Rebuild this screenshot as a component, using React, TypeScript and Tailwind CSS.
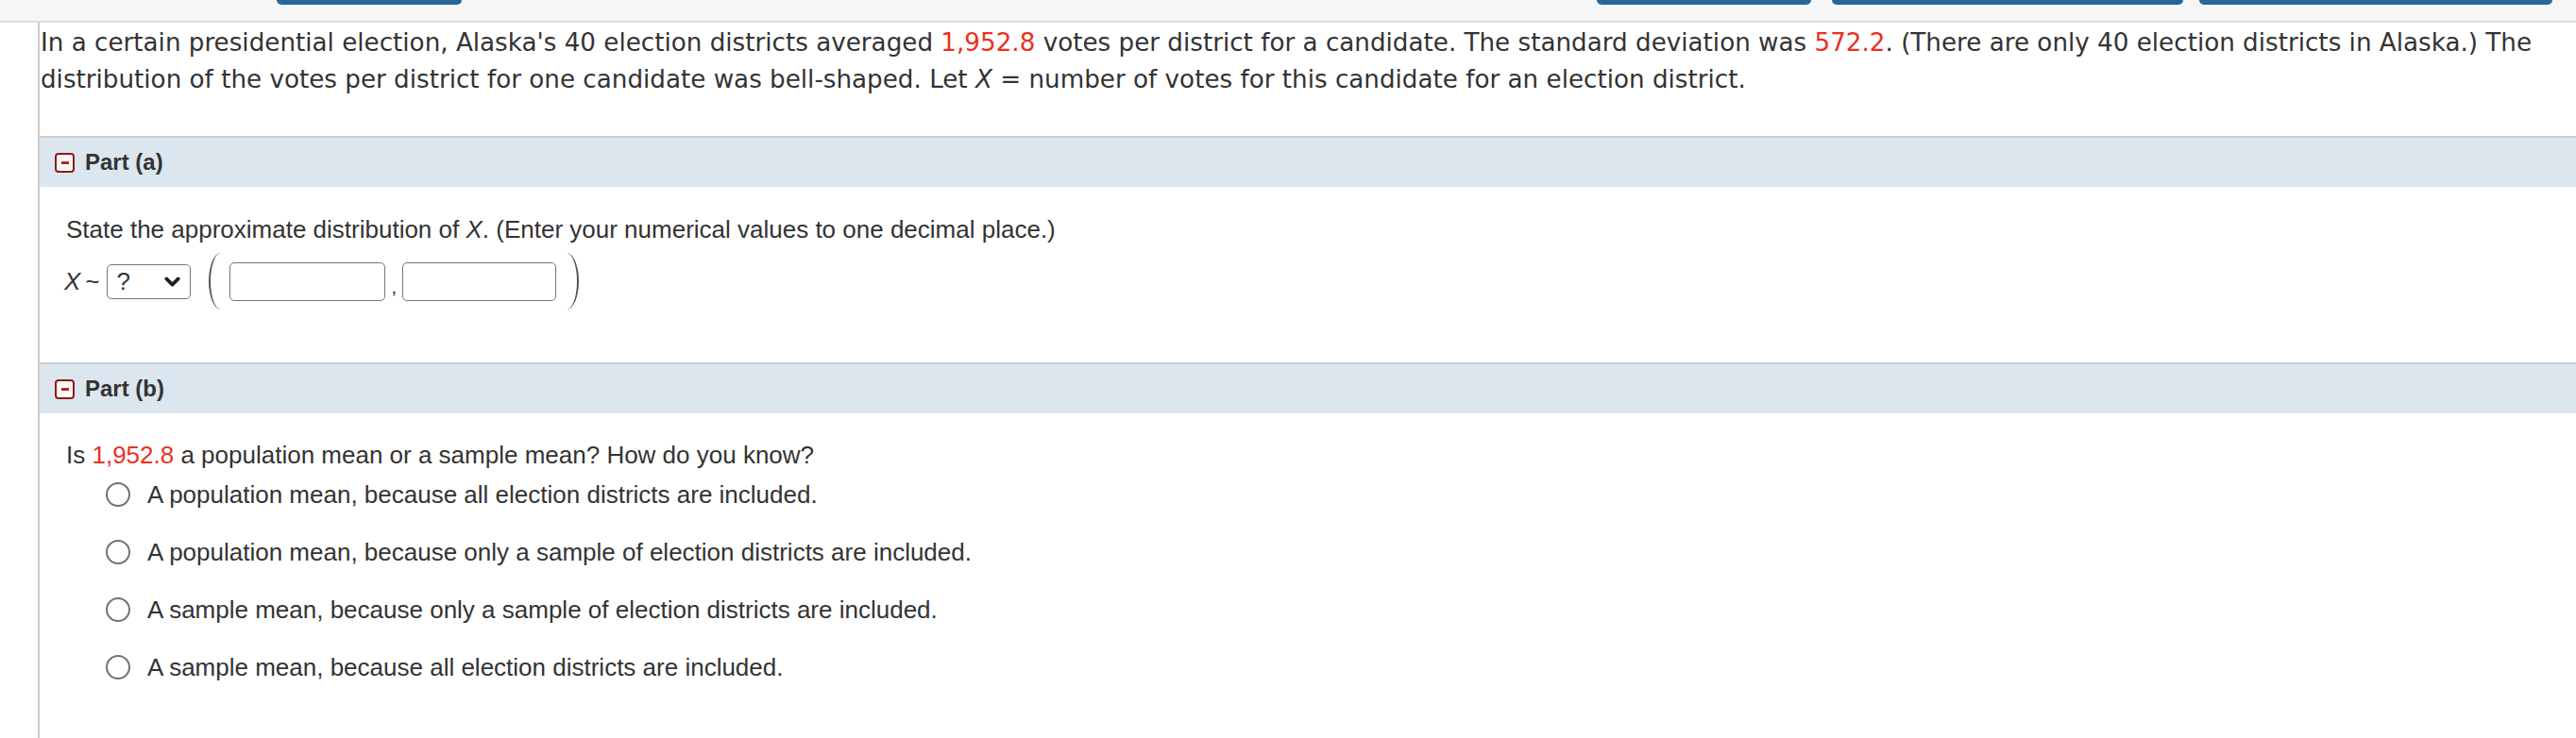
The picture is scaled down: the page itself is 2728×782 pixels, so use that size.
import { ChevronDown } from "lucide-react";

// ─── Shared bits ──────────────────────────────────────────────────────────────
const RED = "text-[#e8311f]";

function CollapseIcon() {
  return (
    <span className="flex h-[21px] w-[21px] shrink-0 items-center justify-center rounded-[4px] border-2 border-[#8b1d14] bg-[#fdf8f7]">
      <span className="h-[3px] w-[8px] bg-[#b3261e]" />
    </span>
  );
}

function PartHeader({ label }: { label: string }) {
  return (
    <div className="flex h-[54px] items-center gap-[11px] border-t-2 border-[#cccccc] bg-[#dce6ef] pl-[16px]">
      <CollapseIcon />
      <span className="text-[24px] font-bold text-[#333333]">{label}</span>
    </div>
  );
}

function OpenParen() {
  return (
    <span className="block h-[60px] w-[13px] shrink-0 overflow-hidden">
      <span className="block h-[60px] w-[26px] rounded-[50%] border-l-[2.5px] border-[#555555]" />
    </span>
  );
}

function CloseParen() {
  return (
    <span className="block h-[60px] w-[13px] shrink-0 overflow-hidden">
      <span className="-ml-[13px] block h-[60px] w-[26px] rounded-[50%] border-r-[2.5px] border-[#555555]" />
    </span>
  );
}

function Radio({ label }: { label: string }) {
  return (
    <label className="flex h-[30px] items-center gap-[18px]">
      <span className="h-[26px] w-[26px] shrink-0 rounded-full border-2 border-[#727272] bg-white" />
      <span>{label}</span>
    </label>
  );
}

const OPTIONS = [
  "A population mean, because all election districts are included.",
  "A population mean, because only a sample of election districts are included.",
  "A sample mean, because only a sample of election districts are included.",
  "A sample mean, because all election districts are included.",
];

export default function App() {
  return (
    <div className="min-h-[782px] w-full bg-white font-['Liberation_Sans',Arial,sans-serif] text-[#333333]">
      {/* ── Toolbar strip with the bottoms of the nav buttons ─────────────── */}
      <div className="flex h-[24px] border-b-2 border-[#dedede] bg-[#f6f6f6]">
        <span className="ml-[293px] h-[5px] w-[196px] rounded-b-[7px] bg-[#2a6597]" />
        <span className="ml-[1202px] h-[5px] w-[227px] rounded-b-[7px] bg-[#2a6597]" />
        <span className="ml-[22px] h-[5px] w-[372px] rounded-b-[7px] bg-[#2a6597]" />
        <span className="ml-[17px] h-[5px] w-[374px] rounded-b-[7px] bg-[#2a6597]" />
      </div>

      <div className="flex">
        <div className="w-[40px] shrink-0" />
        <div className="min-h-[758px] flex-1 border-l-2 border-[#cccccc]">
          {/* ── Problem statement ─────────────────────────────────────────── */}
          <p className="pb-[40px] pl-[1px] pt-[2px] font-['DejaVu_Sans',Verdana,sans-serif] text-[26.2px] leading-[39px]">
            In a certain presidential election, Alaska's 40 election districts averaged{" "}
            <span className={RED}>1,952.8</span> votes per district for a candidate. The standard deviation
            was <span className={RED}>572.2</span>. (There are only 40 election districts in Alaska.) The
            distribution of the votes per district for one candidate was bell-shaped. Let <i>X</i> = number
            of votes for this candidate for an election district.
          </p>

          {/* ── Part (a) ───────────────────────────────────────────────────── */}
          <PartHeader label="Part (a)" />
          <div className="pb-[56px] pl-[28px] pt-[30px] text-[26px]">
            <p className="leading-[30px]">
              State the approximate distribution of <i>X</i>. (Enter your numerical values to one decimal
              place.)
            </p>
            <div className="mt-[10px] flex h-[60px] items-center">
              <i className="-ml-[2px] leading-none">X</i>
              <span className="ml-[5px] leading-none">~</span>
              <div className="ml-[7px] flex h-[37px] w-[89px] items-center justify-between rounded-[5px] border-[1.5px] border-[#767676] pl-[10px] pr-[6px]">
                <span className="leading-none">?</span>
                <ChevronDown size={25} strokeWidth={3.6} className="text-[#1f1f1f]" />
              </div>
              <span className="ml-[19px]">
                <OpenParen />
              </span>
              <input
                type="text"
                className="ml-[9px] h-[41px] w-[165px] rounded-[5px] border-[1.5px] border-[#767676] bg-white px-2 outline-none"
              />
              <span className="ml-[7px] self-end pb-[14px] text-[20px] leading-none">,</span>
              <input
                type="text"
                className="ml-[6px] h-[41px] w-[163px] rounded-[5px] border-[1.5px] border-[#767676] bg-white px-2 outline-none"
              />
              <span className="ml-[11px]">
                <CloseParen />
              </span>
            </div>
          </div>

          {/* ── Part (b) ───────────────────────────────────────────────────── */}
          <PartHeader label="Part (b)" />
          <div className="pl-[28px] pt-[29px] text-[26px]">
            <p className="leading-[30px]">
              Is <span className={RED}>1,952.8</span> a population mean or a sample mean? How do you know?
            </p>
            <div className="ml-[42px] mt-[12px] flex flex-col gap-[31px] leading-[30px]">
              {OPTIONS.map((o) => (
                <Radio key={o} label={o} />
              ))}
            </div>
          </div>
        </div>
      </div>
    </div>
  );
}
